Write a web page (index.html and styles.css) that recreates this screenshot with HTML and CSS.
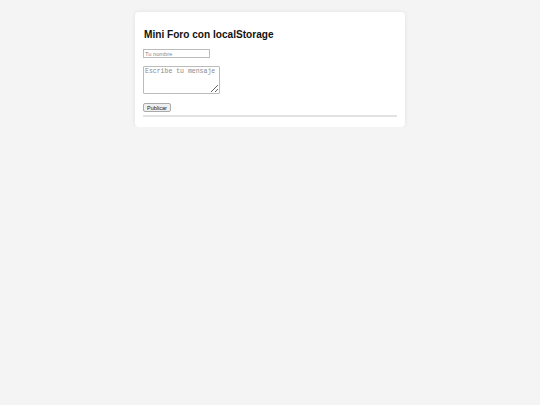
FILE: index.html
```html
<!DOCTYPE html>
<html>
<head>
  <title>Mini Foro</title>
  <link rel="stylesheet" href="styles.css">
</head>
<body>
  <div class="container">
    <h2>Mini Foro con localStorage</h2>
    <form id="postForm">
      <input type="text" id="author" placeholder="Tu nombre">
      <textarea id="content" placeholder="Escribe tu mensaje"></textarea>
      <button type="submit">Publicar</button>
    </form>
    <div id="posts"></div>
  </div>
</body>
</html>
```

FILE: styles.css
```css
body {
  font-family: "Liberation Sans", Arial, sans-serif;
  background: #f4f4f4;
  margin: 0;
  padding-top: 12px;
}

.container {
  width: 270px;
  box-sizing: border-box;
  margin: 0 auto;
  padding: 10px 8px 10px 8px;
  background: #fff;
  border-radius: 4px;
  box-shadow: 0 0 4px rgba(0, 0, 0, 0.08);
}

h2 {
  font-size: 10.1px;
  margin: 7px 0 9px 1px;
  color: #111;
}

form {
  display: flex;
  flex-direction: column;
  align-items: flex-start;
}

input[type="text"] {
  width: 67px;
  height: 9px;
  box-sizing: border-box;
  padding: 0 1px;
  font-family: "Liberation Sans", Arial, sans-serif;
  font-size: 5.7px;
  border: 1px solid #bbb;
  margin: 0 0 8px 0;
}

textarea {
  width: 77px;
  height: 28px;
  box-sizing: border-box;
  padding: 1px;
  font-family: "Liberation Mono", monospace;
  font-size: 6.5px;
  border: 1px solid #bbb;
  border-radius: 1px;
  margin: 0 0 9px 0;
}

::placeholder {
  color: #8a8a8a;
}

button {
  width: 28px;
  height: 9px;
  box-sizing: border-box;
  padding: 0;
  font-family: "Liberation Sans", Arial, sans-serif;
  font-size: 5.5px;
  color: #222;
  background: #efefef;
  border: 1px solid #aaa;
  border-radius: 2px;
}

#posts {
  margin-top: 3px;
  border-top: 2px solid #e2e2e2;
}
```
